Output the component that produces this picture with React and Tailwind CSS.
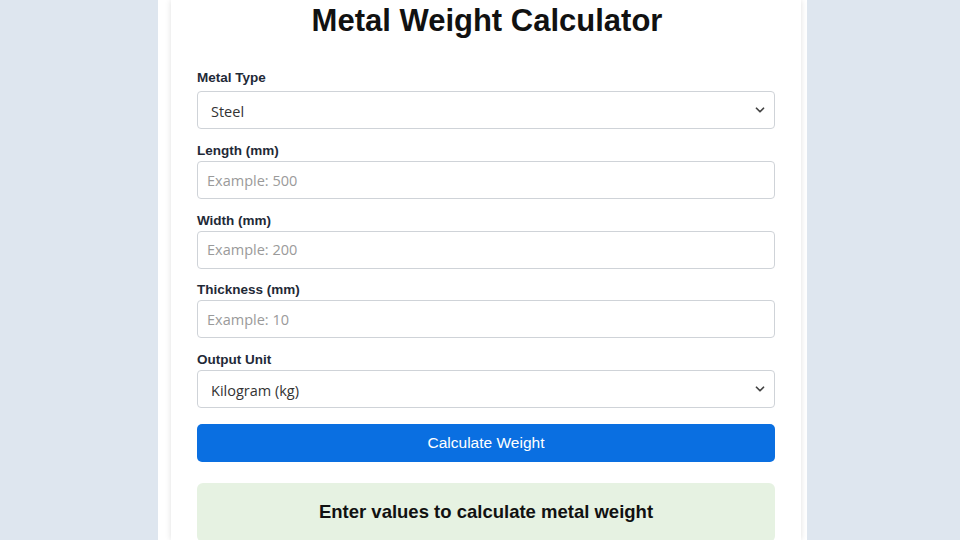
import { ChevronDown } from "lucide-react";

const fields = [
    { label: "Length (mm)", placeholder: "Example: 500" },
    { label: "Width (mm)", placeholder: "Example: 200" },
    { label: "Thickness (mm)", placeholder: "Example: 10" },
];

function Label({ children, first }) {
    return (
        <label
            className={`block text-[13.5px] font-bold text-[#1f2a37] leading-4 ${first ? "mb-[5px]" : "mb-[2px]"}`}
        >
            {children}
        </label>
    );
}

function Select({ value }) {
    return (
        <div className="relative">
            <select
                defaultValue={value}
                className="appearance-none w-full h-[38px] pl-[13px] pr-8 pt-[4px] border border-[#cfd3d8] rounded-[4px] bg-white text-[14.5px] text-[#333] font-['Open_Sans',sans-serif] outline-none"
            >
                <option>{value}</option>
            </select>
            <ChevronDown
                className="absolute right-[8px] top-1/2 -translate-y-1/2 text-[#444] pointer-events-none"
                size={14}
                strokeWidth={3}
            />
        </div>
    );
}

export default function App() {
    return (
        <div className="h-[540px] bg-[#dee6ef] font-['Liberation_Sans',Arial,sans-serif] overflow-hidden">
            <div className="ml-[158px] w-[649px] h-full bg-white pl-[13px] pr-[6px]">
                <div className="h-full bg-white shadow-[0_0_6px_rgba(0,0,0,0.13)] px-[26px]">
                    <h1 className="text-[31px] font-bold text-[#111] text-center leading-[40px] pt-[1px] mb-[29px] pl-[2px]">
                        Metal Weight Calculator
                    </h1>

                    <div className="mb-[14px]">
                        <Label first>Metal Type</Label>
                        <Select value="Steel" />
                    </div>

                    {fields.map((f) => (
                        <div key={f.label} className="mb-[13.5px]">
                            <Label>{f.label}</Label>
                            <input
                                placeholder={f.placeholder}
                                className="w-full h-[38px] px-[9px] border border-[#cfd3d8] rounded-[4px] text-[14.5px] font-['Open_Sans',sans-serif] placeholder:text-[#9a9a9a] outline-none"
                            />
                        </div>
                    ))}

                    <div className="mb-[16px]">
                        <Label>Output Unit</Label>
                        <Select value="Kilogram (kg)" />
                    </div>

                    <button className="w-full h-[38px] rounded-[5px] bg-[#0a6fe1] text-white text-[15.5px] mb-[21px]">
                        Calculate Weight
                    </button>

                    <div className="bg-[#e6f2e2] rounded-[6px] pt-[19px] pb-[20px] text-center">
                        <p className="text-[18.5px] font-bold text-[#111] leading-[20px]">
                            Enter values to calculate metal weight
                        </p>
                    </div>
                </div>
            </div>
        </div>
    );
}
